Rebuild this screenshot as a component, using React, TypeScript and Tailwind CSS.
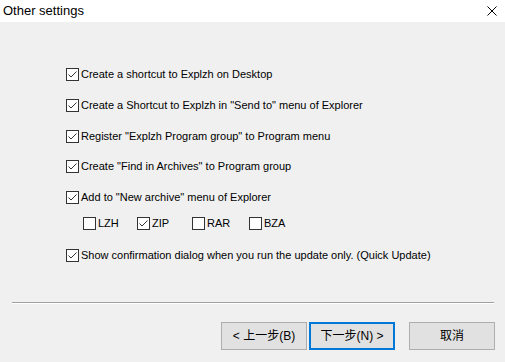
import React from "react";

const FONT = { fontFamily: '"Liberation Sans", "Noto Sans CJK SC", sans-serif' };

function Box({ checked }: { checked: boolean }) {
    return (
        <span className="w-[13px] h-[13px] shrink-0 border border-[#333333] bg-white flex items-center justify-center">
            {checked && (
                <svg width="11" height="11" viewBox="0 0 11 11">
                    <polyline points="1.5,5.5 4,8 9.5,2.5" fill="none" stroke="#333333" strokeWidth="1" />
                </svg>
            )}
        </span>
    );
}

function Row({ label, checked = true, className = "" }: { label: string; checked?: boolean; className?: string }) {
    return (
        <div className={`flex items-center h-[13px] ${className}`}>
            <Box checked={checked} />
            <span className="ml-[2px] text-[11px] text-black whitespace-nowrap leading-none">{label}</span>
        </div>
    );
}

export default function App() {
    const archives = [
        { name: "LZH", checked: false, w: "w-[54px]" },
        { name: "ZIP", checked: true, w: "w-[55px]" },
        { name: "RAR", checked: false, w: "w-[57px]" },
        { name: "BZA", checked: false, w: "w-[50px]" },
    ];

    return (
        <div className="w-[505px] h-[362px] bg-[#f0f0f0] flex flex-col overflow-hidden" style={FONT}>
            {/* title bar */}
            <div className="h-[22px] bg-white flex items-center justify-between pl-[3px] pr-[8px]">
                <span className="text-[13px] text-black">Other settings</span>
                <svg width="10" height="10" viewBox="0 0 10 10">
                    <path d="M0.5 0.5 L9.5 9.5 M9.5 0.5 L0.5 9.5" stroke="#000" strokeWidth="1" />
                </svg>
            </div>

            {/* options */}
            <div className="flex flex-col pl-[66px] pt-[46px]">
                <Row label="Create a shortcut to Explzh on Desktop" />
                <Row className="mt-[18px]" label={'Create a Shortcut to Explzh in "Send to" menu of Explorer'} />
                <Row className="mt-[18px]" label={'Register "Explzh Program group" to Program menu'} />
                <Row className="mt-[17px]" label={'Create "Find in Archives" to Program group'} />
                <Row className="mt-[18px]" label={'Add to "New archive" menu of Explorer'} />
                <div className="flex mt-[13px] pl-[17px]">
                    {archives.map(a => (
                        <div key={a.name} className={a.w}>
                            <Row label={a.name} checked={a.checked} />
                        </div>
                    ))}
                </div>
                <Row className="mt-[19px]" label="Show confirmation dialog when you run the update only. (Quick Update)" />
            </div>

            {/* separator */}
            <div className="mt-[40px] ml-[12px] mr-[11px] border-t border-t-[#a0a0a0] border-b border-b-white" />

            {/* buttons */}
            <div className="flex justify-end pr-[10px] mt-[18px] text-[12px] text-black">
                <button className="w-[86px] h-[28px] bg-[#e1e1e1] border border-[#adadad]">&lt; 上一步(B)</button>
                <button className="ml-[2px] w-[86px] h-[28px] bg-[#e1e1e1] border-2 border-[#0078d7]">下一步(N) &gt;</button>
                <button className="ml-[14px] w-[86px] h-[28px] bg-[#e1e1e1] border border-[#adadad]">取消</button>
            </div>
        </div>
    );
}
